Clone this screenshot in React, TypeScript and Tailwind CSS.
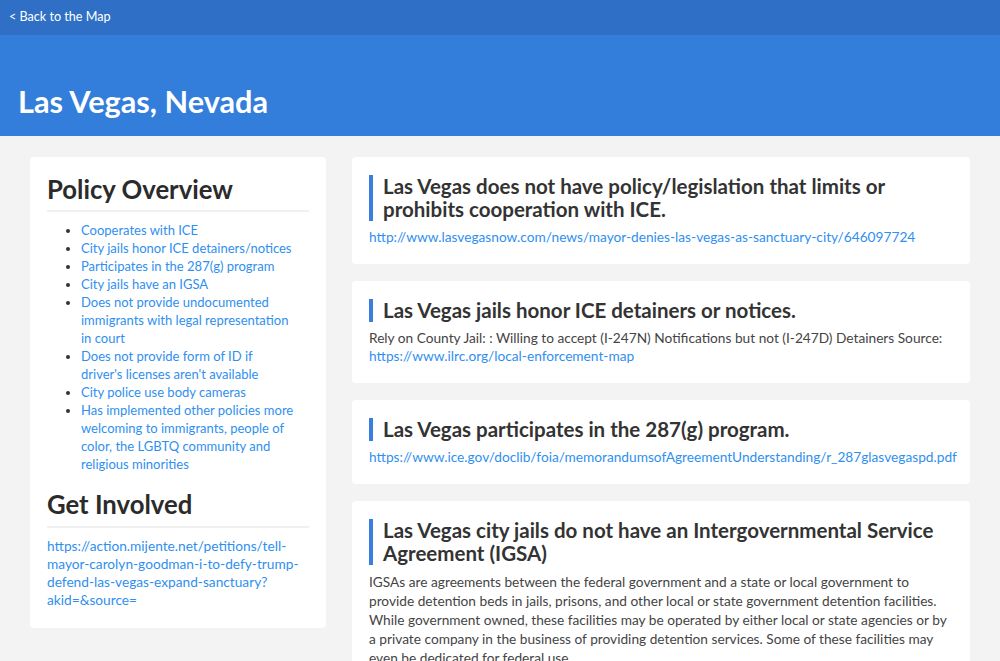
const policyItems = [
  "Cooperates with ICE",
  "City jails honor ICE detainers/notices",
  "Participates in the 287(g) program",
  "City jails have an IGSA",
  "Does not provide undocumented immigrants with legal representation in court",
  "Does not provide form of ID if driver's licenses aren't available",
  "City police use body cameras",
  "Has implemented other policies more welcoming to immigrants, people of color, the LGBTQ community and religious minorities",
];

interface PolicyCardProps {
  title: string;
  children: React.ReactNode;
}

function PolicyCard(props: PolicyCardProps) {
  return (
    <div className="bg-white rounded-[4px] pl-[17px] pr-[20px] pt-[18px] pb-[18px]">
      <h3 className="border-l-4 border-[#3a7fdf] pl-[10px] text-[20.5px] leading-[23px] font-bold text-[#333333]">
        {props.title}
      </h3>
      <div className="mt-[7px] text-[13.7px] leading-[18px] text-[#444444]">
        {props.children}
      </div>
    </div>
  );
}

function App() {
  return (
    <div className="min-h-[661px] bg-[#f3f3f3] font-['Lato','Liberation_Sans',sans-serif]">
      <div className="h-[35px] bg-[#2f6fc5] flex items-center px-[9px]">
        <a className="text-[12.6px] text-white">&lt; Back to the Map</a>
      </div>
      <div className="h-[101px] bg-[#337edb] flex items-end px-[18px] pb-[16px]">
        <h1 className="text-[30.7px] leading-[36px] font-bold text-white">
          Las Vegas, Nevada
        </h1>
      </div>

      <div className="flex items-start gap-[26px] px-[30px] pt-[21px] pb-[30px]">
        <div className="w-[296px] shrink-0 bg-white rounded-[4px] px-[17px] pt-[17px] pb-[19px]">
          <h2 className="text-[25.7px] leading-[30px] font-bold text-[#2b2b2b] pb-[6px] border-b-2 border-[#f0f0f0]">
            Policy Overview
          </h2>
          <ul className="list-disc pl-[34px] pr-[14px] mt-[9px] text-[13px] leading-[18px] text-[#2f8ff0] marker:text-[#333333]">
            {policyItems.map((item) => (
              <li key={item}>
                <a>{item}</a>
              </li>
            ))}
          </ul>
          <h2 className="mt-[16px] text-[25.7px] leading-[30px] font-bold text-[#2b2b2b] pb-[7px] border-b-2 border-[#f0f0f0]">
            Get Involved
          </h2>
          <a className="block mt-[9px] text-[13.7px] leading-[18px] text-[#2f8ff0] break-words">
            https://action.mijente.net/petitions/tell-mayor-carolyn-goodman-i-to-defy-trump-defend-las-vegas-expand-sanctuary?akid=&amp;source=
          </a>
        </div>

        <div className="flex-1 min-w-0 flex flex-col gap-[17px]">
          <PolicyCard title="Las Vegas does not have policy/legislation that limits or prohibits cooperation with ICE.">
            <a className="text-[#2f8ff0]">
              http://www.lasvegasnow.com/news/mayor-denies-las-vegas-as-sanctuary-city/646097724
            </a>
          </PolicyCard>
          <PolicyCard title="Las Vegas jails honor ICE detainers or notices.">
            Rely on County Jail: : Willing to accept (I-247N) Notifications but
            not (I-247D) Detainers Source:{" "}
            <a className="text-[#2f8ff0]">
              https://www.ilrc.org/local-enforcement-map
            </a>
          </PolicyCard>
          <PolicyCard title="Las Vegas participates in the 287(g) program.">
            <a className="text-[#2f8ff0] whitespace-nowrap">
              https://www.ice.gov/doclib/foia/memorandumsofAgreementUnderstanding/r_287glasvegaspd.pdf
            </a>
          </PolicyCard>
          <PolicyCard title="Las Vegas city jails do not have an Intergovernmental Service Agreement (IGSA)">
            <p className="leading-[19px]">
              IGSAs are agreements between the federal government and a state
              or local government to provide detention beds in jails, prisons,
              and other local or state government detention facilities. While
              government owned, these facilities may be operated by either
              local or state agencies or by a private company in the business
              of providing detention services. Some of these facilities may
              even be dedicated for federal use.
            </p>
          </PolicyCard>
        </div>
      </div>
    </div>
  );
}

export default App;
